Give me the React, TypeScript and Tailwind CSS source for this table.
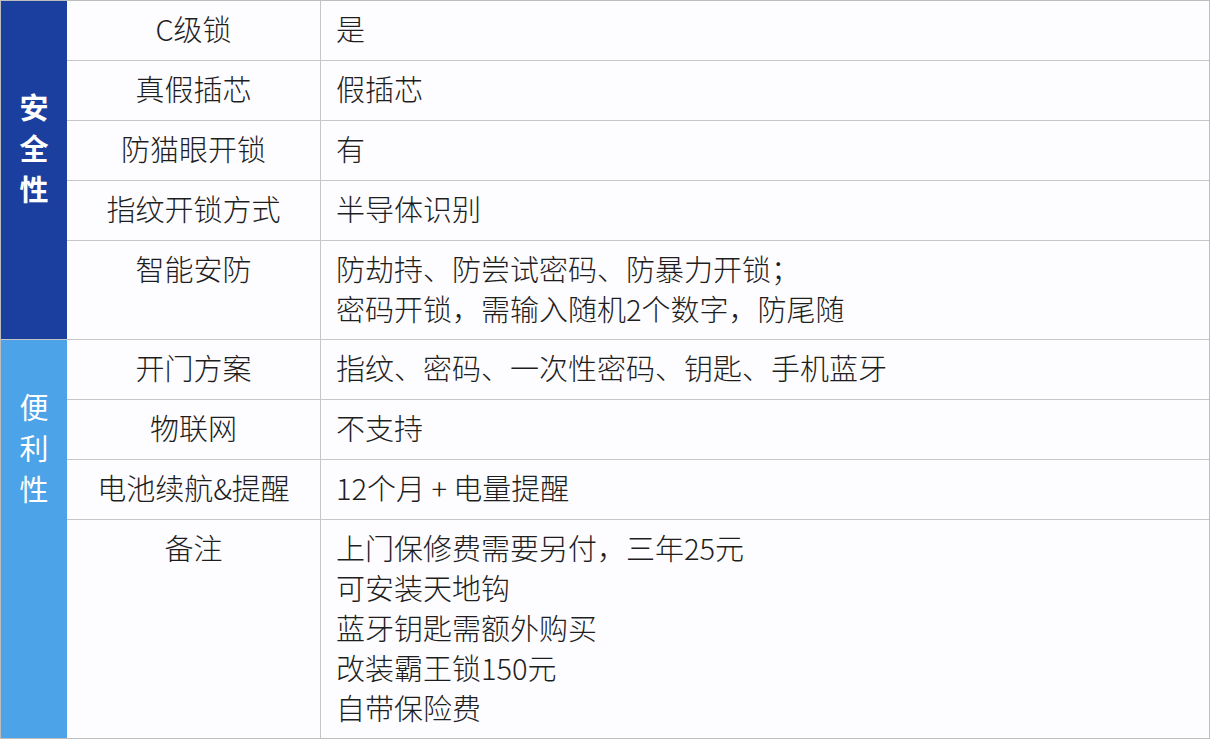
import React from 'react';

interface Row {
  label: string;
  lines: string[];
  height: string;
}

const safetyRows: Row[] = [
  { label: 'C级锁', lines: ['是'], height: 'h-[60px]' },
  { label: '真假插芯', lines: ['假插芯'], height: 'h-[60px]' },
  { label: '防猫眼开锁', lines: ['有'], height: 'h-[60px]' },
  { label: '指纹开锁方式', lines: ['半导体识别'], height: 'h-[60px]' },
  {
    label: '智能安防',
    lines: ['防劫持、防尝试密码、防暴力开锁；', '密码开锁，需输入随机2个数字，防尾随'],
    height: 'h-[98px]',
  },
];

const convenienceRows: Row[] = [
  { label: '开门方案', lines: ['指纹、密码、一次性密码、钥匙、手机蓝牙'], height: 'h-[60px]' },
  { label: '物联网', lines: ['不支持'], height: 'h-[60px]' },
  { label: '电池续航&提醒', lines: ['12个月 + 电量提醒'], height: 'h-[60px]' },
  {
    label: '备注',
    lines: ['上门保修费需要另付，三年25元', '可安装天地钩', '蓝牙钥匙需额外购买', '改装霸王锁150元', '自带保险费'],
    height: 'h-[218px]',
  },
];

const TableRow = ({ row, last }: { row: Row; last: boolean }) => (
  <div className={`flex ${row.height} ${last ? '' : 'border-b border-[#c6c6c6]'}`}>
    <div className="w-[254px] shrink-0 border-r border-[#c6c6c6] pt-[7px] text-center">
      {row.label}
    </div>
    <div className="flex-1 pl-[15px] pt-[7px]">
      {row.lines.map((line) => (
        <div key={line}>{line}</div>
      ))}
    </div>
  </div>
);

const Section = ({
  title,
  rows,
  color,
  bold,
  padTop,
  last,
}: {
  title: string;
  rows: Row[];
  color: string;
  bold: boolean;
  padTop: string;
  last: boolean;
}) => (
  <div className={`flex ${last ? '' : 'border-b border-[#c6c6c6]'}`}>
    <div
      className={`w-[66px] shrink-0 ${color} ${padTop} flex flex-col items-center text-white leading-[41px] ${
        bold ? 'font-bold' : 'font-normal'
      }`}
    >
      {title.split('').map((ch, i) => (
        <span key={i}>{ch}</span>
      ))}
    </div>
    <div className="flex-1">
      {rows.map((row, i) => (
        <TableRow key={row.label} row={row} last={i === rows.length - 1} />
      ))}
    </div>
  </div>
);

export default function App() {
  return (
    <div className="h-[746px] w-[1220px] bg-white">
      <div
        className="w-[1210px] border border-[#bdbdbd] bg-[#fdfcff] text-[29px] font-light leading-[40px] text-[#1e1e1e]"
        style={{ fontFamily: '"Noto Sans CJK SC", "Noto Sans", sans-serif' }}
      >
        <Section title="安全性" rows={safetyRows} color="bg-[#1b3f9f]" bold padTop="pt-[85px]" last={false} />
        <Section title="便利性" rows={convenienceRows} color="bg-[#4ca3e7]" bold={false} padTop="pt-[46px]" last />
      </div>
    </div>
  );
}
